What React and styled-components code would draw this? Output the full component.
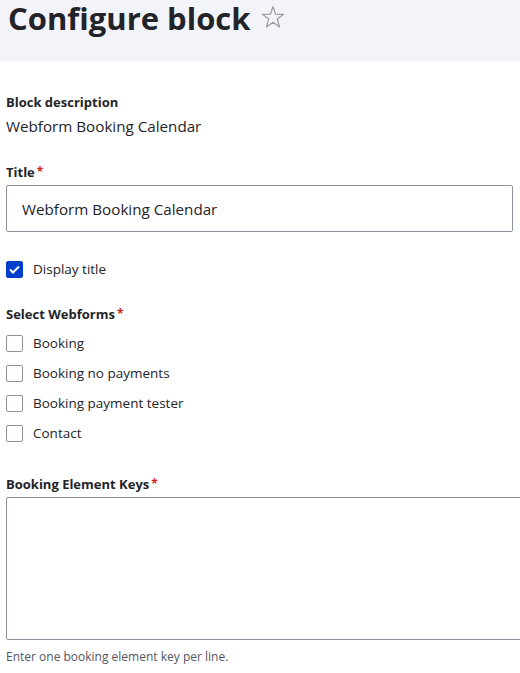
import React from 'react';
import styled, { createGlobalStyle } from 'styled-components';

const GlobalStyle = createGlobalStyle`
  body {
    margin: 0;
    background: #fff;
    font-family: "Open Sans", "Noto Sans", sans-serif;
    color: #222330;
  }
`;

const PageHeader = styled.header`
  background: #f3f4f9;
  height: 61px;
  padding: 0 8px;
  box-sizing: border-box;
  display: flex;
  align-items: flex-start;
`;

const PageTitle = styled.h1`
  margin: 0;
  font-size: 31px;
  line-height: 36px;
  font-weight: 700;
  color: #232429;
  display: flex;
  align-items: center;
`;

const StarIcon = styled.svg`
  margin-left: 10px;
  margin-top: -2px;
  flex: none;
`;

const Form = styled.form`
  padding: 32px 6px 0 6px;
  display: flex;
  flex-direction: column;
`;

const Item = styled.div`
  margin-bottom: ${(p) => p.$gap || 24}px;
`;

const Label = styled.div`
  font-size: 13px;
  font-weight: 700;
  line-height: 18px;
  margin-bottom: ${(p) => p.$mb || 4}px;
  color: #232429;
  &::after {
    content: ${(p) => (p.$required ? "'*'" : 'none')};
    color: #d72222;
    margin-left: 2px;
    font-size: 12px;
    vertical-align: 1px;
  }
`;

const Value = styled.div`
  font-size: 15.2px;
  line-height: 22px;
  color: #232429;
`;

const TextInput = styled.input`
  box-sizing: border-box;
  display: block;
  width: 507px;
  height: 47px;
  border: 1px solid #8e929c;
  border-radius: 2px;
  padding: 0 15px;
  font-family: inherit;
  font-size: 15.2px;
  color: #232429;
  outline: none;
`;

const CheckList = styled.div`
  display: flex;
  flex-direction: column;
`;

const CheckRow = styled.label`
  display: flex;
  align-items: center;
  gap: 10px;
  height: 30px;
  font-size: 13.5px;
  color: #232429;
`;

const Box = styled.span`
  box-sizing: border-box;
  width: 17px;
  height: 17px;
  border-radius: 2px;
  border: 1px solid ${(p) => (p.$checked ? '#003ecc' : '#8e929c')};
  background: ${(p) => (p.$checked ? '#003ecc' : '#fff')};
  display: flex;
  align-items: center;
  justify-content: center;
`;

const TextArea = styled.textarea`
  box-sizing: border-box;
  display: block;
  width: 540px;
  height: 143px;
  border: 1px solid #8e929c;
  border-radius: 2px;
  resize: none;
  outline: none;
  font-family: inherit;
`;

const Help = styled.div`
  font-size: 12px;
  line-height: 16px;
  color: #545560;
  margin-top: 9px;
`;

const Checkbox = ({ checked, children }) => (
  <CheckRow>
    <Box $checked={checked}>
      {checked && (
        <svg width="11" height="9" viewBox="0 0 11 9">
          <path d="M1 4.5 L4 7.5 L10 1.5" fill="none" stroke="#fff" strokeWidth="2" />
        </svg>
      )}
    </Box>
    {children}
  </CheckRow>
);

const webforms = ['Booking', 'Booking no payments', 'Booking payment tester', 'Contact'];

export default function App() {
  return (
    <>
      <GlobalStyle />
      <PageHeader>
        <PageTitle>
          Configure block
          <StarIcon width="24" height="24" viewBox="0 0 24 24">
            <path
              d="M12 1.5 L14.6 9.2 L22.7 9.3 L16.2 14.1 L18.6 21.9 L12 17.2 L5.4 21.9 L7.8 14.1 L1.3 9.3 L9.4 9.2 Z"
              fill="none"
              stroke="#9a9da6"
              strokeWidth="1.2"
              strokeLinejoin="round"
            />
          </StarIcon>
        </PageTitle>
      </PageHeader>
      <Form>
        <Item $gap={26}>
          <Label>Block description</Label>
          <Value>Webform Booking Calendar</Value>
        </Item>
        <Item $gap={22}>
          <Label $required>Title</Label>
          <TextInput defaultValue="Webform Booking Calendar" />
        </Item>
        <Item $gap={21}>
          <Checkbox checked>Display title</Checkbox>
        </Item>
        <Item $gap={27}>
          <Label $required $mb={5}>Select Webforms</Label>
          <CheckList>
            {webforms.map((w) => (
              <Checkbox key={w}>{w}</Checkbox>
            ))}
          </CheckList>
        </Item>
        <Item>
          <Label $required>Booking Element Keys</Label>
          <TextArea />
          <Help>Enter one booking element key per line.</Help>
        </Item>
      </Form>
    </>
  );
}
